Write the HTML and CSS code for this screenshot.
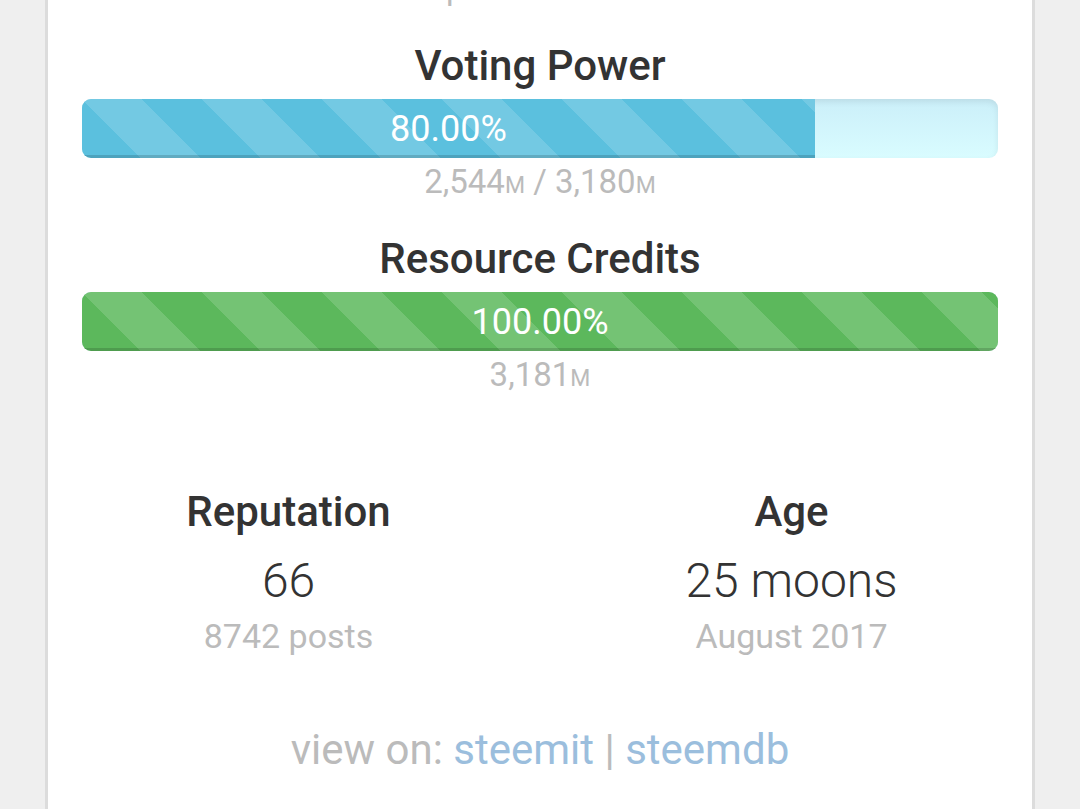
FILE: index.html
```html
<!DOCTYPE html>
<html lang="en">
<head>
    <meta charset="UTF-8">
    <meta name="viewport" content="width=device-width, initial-scale=1.0">
    <title>Account Overview</title>
    <link rel="stylesheet" href="styles.css">
</head>
<body>
    <div class="account-card">
        <div class="meter-sub meter-sub-top">power: 33.3k</div>

        <!-- Voting Power -->
        <div class="meter-block">
            <h3 class="meter-title">Voting Power</h3>
            <div class="meter meter-info">
                <div class="meter-fill" style="width: 80%;">80.00%</div>
            </div>
            <div class="meter-sub">2,544<span class="unit">M</span> / 3,180<span class="unit">M</span></div>
        </div>

        <!-- Resource Credits -->
        <div class="meter-block">
            <h3 class="meter-title">Resource Credits</h3>
            <div class="meter meter-success">
                <div class="meter-fill" style="width: 100%;">100.00%</div>
            </div>
            <div class="meter-sub">3,181<span class="unit">M</span></div>
        </div>

        <div class="stats-row">
            <div class="stat">
                <h3 class="stat-title">Reputation</h3>
                <div class="stat-value">66</div>
                <div class="stat-sub">8742 posts</div>
            </div>
            <div class="stat">
                <h3 class="stat-title">Age</h3>
                <div class="stat-value">25 moons</div>
                <div class="stat-sub">August 2017</div>
            </div>
        </div>

        <div class="view-on">
            view on: <a href="#">steemit</a> | <a href="#">steemdb</a>
        </div>
    </div>
</body>
</html>
```

FILE: styles.css
```css
/* Base Styling */
body {
    font-family: Roboto, "Noto Sans", sans-serif;
    margin: 0;
    padding: 0;
    background-color: #efefef;
    overflow: hidden;
}

.account-card {
    margin: 0 45px;
    min-height: 841px;
    padding: 0 34px;
    background-color: white;
    border-left: 3px solid #dcdcdc;
    border-right: 3px solid #dcdcdc;
    text-align: center;
}

/* Meters */
.meter-block {
    margin-top: 33px;
}

.meter-block + .meter-block {
    margin-top: 28px;
}

.meter-title {
    margin: 0 0 8px;
    font-size: 42px;
    font-weight: 500;
    line-height: 50px;
    color: #333;
}

.meter {
    display: flex;
    height: 59px;
    border-radius: 9px;
    overflow: hidden;
    background-image: linear-gradient(to bottom, #cbeff9, #d9fcff);
    box-shadow: inset 0 3px 6px rgba(0, 0, 0, 0.08);
}

.meter-fill {
    display: flex;
    align-items: center;
    justify-content: center;
    height: 100%;
    font-size: 36px;
    color: white;
    background-image: linear-gradient(45deg,
        rgba(255, 255, 255, 0.15) 25%, transparent 25%,
        transparent 50%, rgba(255, 255, 255, 0.15) 50%,
        rgba(255, 255, 255, 0.15) 75%, transparent 75%, transparent);
    background-size: 120px 120px;
    box-shadow: inset 0 -3px 0 rgba(0, 0, 0, 0.15);
}

.meter-info .meter-fill {
    background-color: #5bc0de;
}

.meter-success .meter-fill {
    background-color: #5cb85c;
}

.meter-sub {
    margin-top: 4px;
    font-size: 33px;
    line-height: 40px;
    color: #bbb;
}

.meter-sub-top {
    margin-top: -32px;
}

.unit {
    font-size: 23px;
}

/* Reputation / Age */
.stats-row {
    display: grid;
    grid-template-columns: 503px 503px;
    justify-content: center;
    margin: 88px -11px 0;
}

.stat-title {
    margin: 0 0 17px;
    font-size: 42px;
    font-weight: 500;
    line-height: 50px;
    color: #333;
}

.stat-value {
    font-size: 48px;
    font-weight: 300;
    line-height: 54px;
    color: #333;
}

.stat-sub {
    margin-top: 8px;
    font-size: 34px;
    line-height: 40px;
    color: #bbb;
}

.view-on {
    margin-top: 69px;
    font-size: 42px;
    line-height: 50px;
    color: #bbb;
}

.view-on a {
    color: #9bbedd;
    text-decoration: none;
}
```
